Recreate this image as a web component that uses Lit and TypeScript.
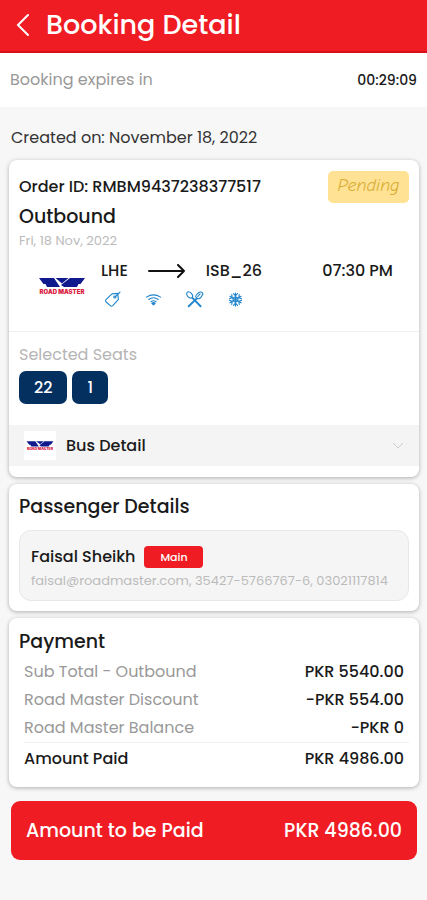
import { LitElement, html, css, svg } from "lit";
import { customElement, property, state } from "lit/decorators.js";

@customElement("road-master-logo")
class RoadMasterLogo extends LitElement {
  static styles = css`
    :host { display: block; }
    .logo { display: block; width: 100%; }
    .wing { fill: #101a8c; }
    .word { fill: #d8203f; font: 900 6px "Inter", sans-serif; }
  `;
  render() {
    return html`<svg class="logo" viewBox="0 0 48 19" role="img" aria-label="Road Master">
      <path class="wing" d="M1 2H16L22 11H9L7.500 8H5.500Z" />
      <path class="wing" d="M17.500 2H30.500L24 7.500Z" />
      <path class="wing" d="M32 2H47L42.500 8H40.500L39 11H26L23 9Z" />
      <text class="word" x="24" y="18" text-anchor="middle">ROAD MASTER</text>
    </svg>`;
  }
}

const icons: Record<string, unknown> = {
  tag: svg`<path d="M1.200 7.800L7.500 2L13.500 1.500L14.300 7.800L8.300 14.500Q7 15.800 5.700 14.600L1.200 10.700Q-.2 9.200 1.200 7.800Z" /><circle cx="10.500" cy="5.300" r="1.100" /><path d="M11.500 4.500L16 .2" />`,
  wifi: svg`<path d="M.5 5.500Q8 .5 15.500 5.500M3 8Q8 4.200 13 8M5.300 10.400Q8 8.200 10.700 10.400" /><path class="solid" d="M6.300 12Q8 10.800 9.700 12L8 13.800Z" />`,
  food: svg`<ellipse cx="2.800" cy="3.200" rx="2.500" ry="3.800" transform="rotate(-42 2.800 3.200)" /><path class="thick" d="M6 6.500L14.500 15.200M1.800 15.200L10.500 6.800" /><path d="M10.500 6.800Q8.200 4.500 10.500 2.500L13 .3Q16.500 -.8 17 2L14.800 5.800Q13 8 10.500 6.800M11.500 4.800L14 2" />`,
  snow: svg`<path d="M8 1V15M2 4.500L14 11.500M2 11.500L14 4.500M5.800 1.800L8 4L10.200 1.800M5.800 14.200L8 12L10.200 14.200M1.600 7.200L4.500 6L4 2.800M14.400 8.800L11.500 10L12 13.200M14.400 7.200L11.500 6L12 2.800M1.600 8.800L4.500 10L4 13.200M8 5L10.600 6.500V9.500L8 11L5.400 9.500V6.500Z" />`,
};

@customElement("amenity-icon")
class AmenityIcon extends LitElement {
  @property() name = "";
  @property() label = "";
  static styles = css`
    :host { display: block; width: 15px; height: 15px; }
    .icon { display: block; width: 100%; height: 100%; overflow: visible; fill: none; stroke: #2386cc; stroke-width: 1.2; stroke-linejoin: round; stroke-linecap: round; }
    .thick { stroke-width: 2; }
    .solid { fill: #2386cc; }
  `;
  render() {
    return html`<svg class="icon" viewBox="0 0 16 16" role="img" aria-label=${this.label}>${icons[this.name]}</svg>`;
  }
}

@customElement("app-root")
class AppRoot extends LitElement {
  @state() expanded = false;

  static styles = css`
    :host { display: block; min-height: 100vh; background: #f7f7f7; color: #1a1a1a; font: 500 16px/24px "Poppins", "Inter", sans-serif; }
    * { box-sizing: border-box; }
    h1, h2, h3, p, ul { margin: 0; padding: 0; list-style: none; }
    button { font: inherit; color: inherit; border: 0; cursor: pointer; }
    .header { display: flex; align-items: center; gap: 15px; height: 53px; padding: 0 16px 2px; background: #ef1c24; border-bottom: 2px solid #d9101a; color: #fff; }
    .back { display: block; padding: 0; background: none; }
    .back svg { display: block; width: 15px; height: 24px; fill: none; stroke: #fff; stroke-width: 2; stroke-linecap: round; }
    .title { font-size: 27px; line-height: 36px; font-weight: 500; }
    .expiry { display: flex; align-items: center; justify-content: space-between; height: 54px; padding: 0 10px; background: #fff; }
    .expiry .label { font-weight: 400; color: #999; }
    .timer { font-size: 14px; }
    .created { padding: 19px 11px 10px; font-weight: 400; color: #333; }
    .main { display: flex; flex-direction: column; gap: 7px; padding: 0 8px 0 9px; }
    .card { background: #fff; border-radius: 8px; box-shadow: 0 1px 4px rgba(0, 0, 0, 0.3); }
    .booking { padding-bottom: 11px; }
    .order { display: flex; justify-content: space-between; align-items: center; padding: 11px 10px 0; }
    .status { width: 81px; padding: 3px 0 5px; border-radius: 5px; background: #ffe294; color: #d8ae35; font: italic 400 18px/24px "Comic Neue", "Lato", sans-serif; text-align: center; }
    .leg { padding: 0 10px; }
    .heading { font-size: 19px; line-height: 28px; font-weight: 500; }
    .date { font-size: 13px; line-height: 20px; font-weight: 400; color: #bbb; }
    .trip { display: flex; gap: 15px; padding: 8px 26px 25px 29px; border-bottom: 1px solid #f0f0f0; }
    .brand { width: 48px; padding-top: 17px; }
    .route { flex: 1; }
    .stops { display: flex; align-items: center; gap: 20px; }
    .stops svg { width: 38px; height: 14px; fill: none; stroke: #111; stroke-width: 2; stroke-linecap: round; stroke-linejoin: round; }
    .amenities { display: flex; gap: 26px; padding: 9px 4px 0; }
    .seats { padding: 11px 10px 21px; }
    .seats .label { font-size: 16px; font-weight: 400; color: #b5b5b5; }
    .chips { display: flex; gap: 5px; padding-top: 4px; }
    .chip { padding: 5px 15px; border-radius: 7px; background: #04305f; color: #fff; line-height: 23px; }
    .bus { display: flex; align-items: center; gap: 10px; width: 100%; height: 41px; padding: 0 15px; background: #f4f4f4; text-align: left; }
    .thumb { width: 32px; padding: 9px 2px; background: #fff; }
    .bus .label { flex: 1; }
    .chevron { width: 12px; height: 8px; fill: none; stroke: #ccc; stroke-width: 1; }
    .seating { padding: 8px 15px 0; }
    .trip { padding-bottom: 24px; }
    .passengers { padding: 9px 10px 10px; }
    .passenger { margin-top: 9px; padding: 14px 11px 8px; border: 1px solid #e7e7e7; border-radius: 12px; background: #f5f5f5; }
    .person { display: flex; align-items: center; gap: 9px; }
    .role { width: 59px; border-radius: 4px; background: #ef1c24; color: #fff; font-size: 11px; line-height: 22px; text-align: center; }
    .contact { font-size: 13px; line-height: 23px; font-weight: 400; color: #bbb; white-space: nowrap; }
    .payment { padding: 10px 10px 12px; }
    .sums { width: 100%; padding-left: 5px; border-spacing: 0; line-height: 28px; margin-top: 2px; }
    .sums th { padding: 0; text-align: left; font-weight: 400; color: #999; }
    .sums td { padding: 0 5px 0 0; text-align: right; }
    .total th, .total td { height: 33px; border-top: 1px solid #f0f0f0; }
    .sums .total th { font-weight: 500; color: #1a1a1a; }
    .pay { display: flex; align-items: center; justify-content: space-between; margin: 7px 2px 0; height: 59px; padding: 0 15px; border-radius: 9px; background: #ef1c24; color: #fff; font-size: 19px; }
  `;

  private sums = [
    ["Sub Total - Outbound", "PKR 5540.00"],
    ["Road Master Discount", "-PKR 554.00"],
    ["Road Master Balance", "-PKR 0"],
  ];
  private amenities = [["tag", "Discount"], ["wifi", "Wi-Fi"], ["food", "Meal"], ["snow", "Air conditioning"]];

  render() {
    return html`
      <header class="header">
        <button class="back" aria-label="Back"><svg viewBox="0 0 15 24"><path d="M12 2L2 12L12 22" /></svg></button>
        <h1 class="title">Booking Detail</h1>
      </header>
      <div class="expiry"><span class="label">Booking expires in</span><time class="timer">00:29:09</time></div>
      <p class="created">Created on: November 18, 2022</p>
      <main class="main">
        <section class="card booking">
          <div class="order"><span class="order-id">Order ID: RMBM9437238377517</span><span class="status">Pending</span></div>
          <div class="leg"><h2 class="heading">Outbound</h2><p class="date">Fri, 18 Nov, 2022</p></div>
          <div class="trip">
            <road-master-logo class="brand"></road-master-logo>
            <div class="route">
              <div class="stops"><span>LHE</span>
                <svg viewBox="0 0 38 14" aria-hidden="true"><path d="M1 7H36M30 1L36 7L30 13" /></svg>
                <span>ISB_26</span></div>
              <div class="amenities">${this.amenities.map(([n, l]) => html`<amenity-icon name=${n} label=${l}></amenity-icon>`)}</div>
            </div>
            <time class="departure">07:30 PM</time>
          </div>
          <div class="seats">
            <h3 class="label">Selected Seats</h3>
            <ul class="chips"><li class="chip">22</li><li class="chip">1</li></ul>
          </div>
          <button class="bus" aria-expanded=${this.expanded} @click=${() => (this.expanded = !this.expanded)}>
            <road-master-logo class="thumb"></road-master-logo><span class="label">Bus Detail</span>
            <svg class="chevron" viewBox="0 0 12 8"><path d="M1 1L6 6L11 1" /></svg>
          </button>
          ${this.expanded ? html`<p class="seating">Road Master</p>` : ""}
        </section>
        <section class="card passengers">
          <h2 class="heading">Passenger Details</h2>
          <div class="passenger">
            <div class="person"><span>Faisal Sheikh</span><span class="role">Main</span></div>
            <p class="contact">faisal@roadmaster.com, 35427-5766767-6, 03021117814</p>
          </div>
        </section>
        <section class="card payment">
          <h2 class="heading">Payment</h2>
          <table class="sums">
            ${this.sums.map(([k, v]) => html`<tr><th scope="row">${k}</th><td>${v}</td></tr>`)}
            <tr class="total"><th scope="row">Amount Paid</th><td>PKR 4986.00</td></tr>
          </table>
        </section>
        <button class="pay"><span>Amount to be Paid</span><span>PKR 4986.00</span></button>
      </main>
    `;
  }
}
